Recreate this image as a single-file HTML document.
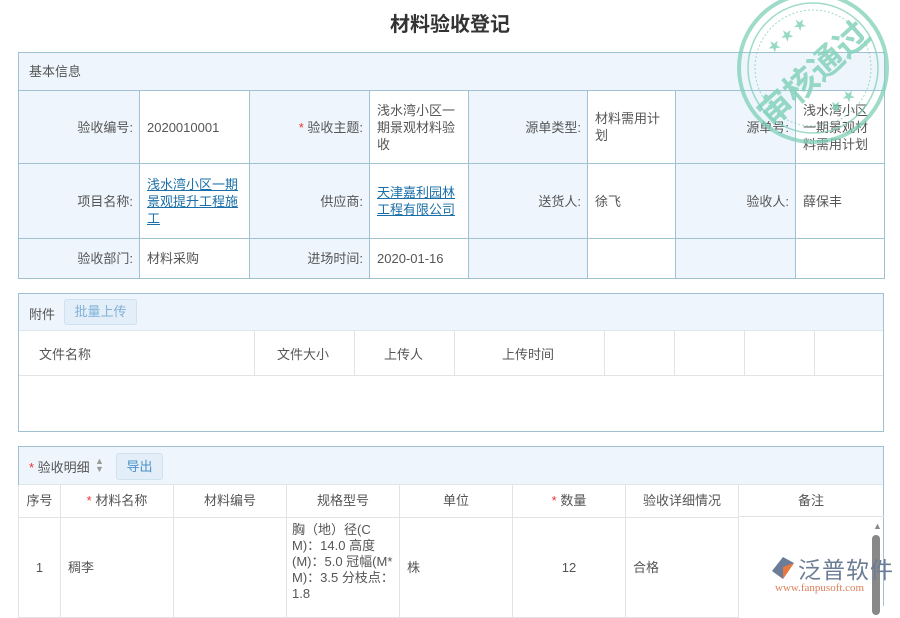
<!DOCTYPE html>
<html><head><meta charset="utf-8"><style>
*{margin:0;padding:0;box-sizing:border-box}
body{width:900px;height:600px;overflow:hidden;background:#fff;font-family:"Liberation Sans","Noto Sans CJK SC",sans-serif;font-size:13px;color:#555;position:relative}
.a{position:absolute}
.title{left:0;width:900px;top:8px;text-align:center;font-size:20px;font-weight:bold;color:#333}
table{border-collapse:collapse;position:absolute;table-layout:fixed}
td{border:1px solid #9fc1d2;vertical-align:middle;line-height:17px;word-break:break-all}
.lab{background:#eef5fc;text-align:right;padding-right:6px}
.val{padding:0 7px}
.lnk{color:#1a6fa8;text-decoration:underline}
.star{color:#e33}
.panel{border:1px solid #9fc1d2}
.hd{background:#eef5fc}
.btn{border:1px solid #cfe2f0;background:#e3eef8;border-radius:3px;color:#7fb2d8;text-align:center}
.t2 td{border:1px solid #e3e3e3;border-top:none}
</style></head><body>
<div class="a title">材料验收登记</div>

<table style="left:18px;top:52px;width:866px">
<colgroup><col style="width:121px"><col style="width:110px"><col style="width:120px"><col style="width:99px"><col style="width:119px"><col style="width:88px"><col style="width:120px"><col style="width:89px"></colgroup>
<tr style="height:38px"><td colspan="8" class="hd" style="padding-left:10px;text-align:left">基本信息</td></tr>
<tr style="height:73px"><td class="lab">验收编号:</td><td class="val">2020010001</td><td class="lab"><span class="star">* </span>验收主题:</td><td class="val">浅水湾小区一期景观材料验收</td><td class="lab">源单类型:</td><td class="val" style="padding-right:14px">材料需用计划</td><td class="lab">源单号:</td><td class="val">浅水湾小区一期景观材料需用计划</td></tr>
<tr style="height:75px"><td class="lab">项目名称:</td><td class="val"><span class="lnk">浅水湾小区一期景观提升工程施工</span></td><td class="lab">供应商:</td><td class="val"><span class="lnk">天津嘉利园林工程有限公司</span></td><td class="lab">送货人:</td><td class="val">徐飞</td><td class="lab">验收人:</td><td class="val">薛保丰</td></tr>
<tr style="height:40px"><td class="lab">验收部门:</td><td class="val">材料采购</td><td class="lab">进场时间:</td><td class="val">2020-01-16</td><td class="lab"></td><td></td><td class="lab"></td><td></td></tr>
</table>

<div class="a panel" style="left:18px;top:293px;width:866px;height:139px">
<div class="hd" style="height:37px;border-bottom:1px solid #dfe6ec;position:relative">
<span class="a" style="left:10px;top:10px">附件</span>
<div class="a btn" style="left:45px;top:5px;width:73px;height:26px;line-height:24px">批量上传</div>
</div>
<div style="position:relative;height:45px;border-bottom:1px solid #e3e3e3">
<div class="a" style="left:20px;top:13px">文件名称</div>
<div class="a" style="left:258px;top:13px">文件大小</div>
<div class="a" style="left:365px;top:13px">上传人</div>
<div class="a" style="left:483px;top:13px">上传时间</div>
<div class="a" style="left:235px;top:0;height:45px;border-left:1px solid #e3e3e3"></div>
<div class="a" style="left:335px;top:0;height:45px;border-left:1px solid #e3e3e3"></div>
<div class="a" style="left:435px;top:0;height:45px;border-left:1px solid #e3e3e3"></div>
<div class="a" style="left:585px;top:0;height:45px;border-left:1px solid #e3e3e3"></div>
<div class="a" style="left:655px;top:0;height:45px;border-left:1px solid #e3e3e3"></div>
<div class="a" style="left:725px;top:0;height:45px;border-left:1px solid #e3e3e3"></div>
<div class="a" style="left:795px;top:0;height:45px;border-left:1px solid #e3e3e3"></div>
</div>
</div>

<div class="a panel" style="left:18px;top:446px;width:866px;height:160px;border-bottom:none">
<div class="hd" style="height:38px;border-bottom:1px solid #dfe6ec;position:relative">
<span class="a" style="left:10px;top:10px"><span class="star">* </span>验收明细</span>
<span class="a" style="left:76px;top:10px;font-size:9px;line-height:8px;color:#999">▲<br>▼</span>
<div class="a btn" style="left:97px;top:6px;width:47px;height:27px;line-height:25px;color:#4a90c8">导出</div>
</div>
<table class="t2" style="left:-1px;top:38px;width:720px">
<colgroup><col style="width:42px"><col style="width:113px"><col style="width:113px"><col style="width:113px"><col style="width:113px"><col style="width:113px"><col style="width:113px"></colgroup>
<tr style="height:32px;text-align:center"><td>序号</td><td><span class="star">* </span>材料名称</td><td>材料编号</td><td>规格型号</td><td>单位</td><td><span class="star">* </span>数量</td><td>验收详细情况</td></tr>
<tr style="height:100px"><td style="text-align:center">1</td><td class="val">稠李</td><td></td><td style="padding:0 5px;line-height:16px;vertical-align:top;padding-top:4px">胸（地）径(CM)：14.0 高度(M)：5.0 冠幅(M*M)：3.5 分枝点：1.8</td><td class="val">株</td><td style="text-align:center">12</td><td class="val">合格</td></tr>
</table>
<div class="a" style="left:719px;top:38px;width:146px;height:32px;border-bottom:1px solid #e3e3e3;text-align:center;line-height:31px">备注</div>
<div class="a" style="left:854px;top:74px;font-size:9px;color:#888">▲</div>
<div class="a" style="left:853px;top:88px;width:8px;height:80px;border-radius:4px;background:#888"></div>
</div>

<svg class="a" style="left:730px;top:-12px" width="170" height="160" viewBox="0 0 170 160">
<g fill="none" stroke="#7fd0b8" opacity="0.75">
<circle cx="83" cy="80" r="74" stroke-width="4"/>
<circle cx="83" cy="80" r="65" stroke-width="1.5"/>
<circle cx="83" cy="80" r="58" stroke-width="1" stroke-dasharray="2 2"/>
</g>
<g fill="#7fd0b8" opacity="0.8" font-size="13"><text x="38" y="62" transform="rotate(-40 45 58)">★ ★ ★</text><text x="100" y="124" transform="rotate(-40 105 120)">★ ★</text></g>
<text x="83" y="98" text-anchor="middle" font-size="34" font-weight="bold" fill="#7fd0b8" opacity="0.8" transform="rotate(-42 83 85)" font-family="Noto Sans CJK SC,sans-serif">审核通过</text>
</svg>

<div class="a" style="left:770px;top:553px;width:125px;height:45px">
<svg class="a" style="left:0;top:2px" width="26" height="26" viewBox="0 0 26 26"><path d="M13 2 L24 8 L13 24 L2 16 Z" fill="#6b7d96"/><path d="M13 12 L24 8 L13 24 Z" fill="#e8783c"/></svg>
<div class="a" style="left:28px;top:-2px;font-size:23px;color:#6b7d96;white-space:nowrap;letter-spacing:1px">泛普软件</div>
<div class="a" style="left:5px;top:29px;font-size:11px;color:#d9805a;font-family:'Liberation Serif',serif;white-space:nowrap">www.fanpusoft.com</div>
</div>
</body></html>
